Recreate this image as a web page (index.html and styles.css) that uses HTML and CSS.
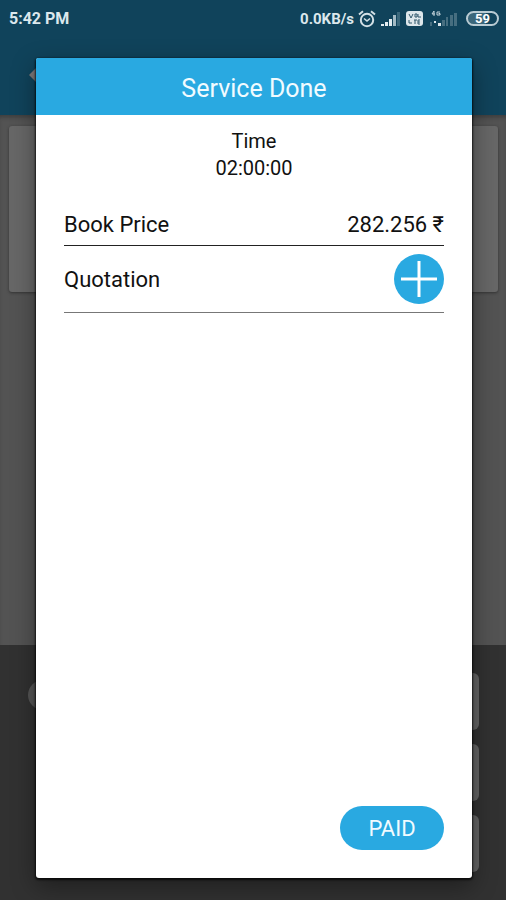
FILE: index.html
```
<!DOCTYPE html>
<html lang="en">
<head>
  <meta charset="UTF-8" />
  <meta name="viewport" content="width=device-width, initial-scale=1.0"/>
  <title>Service Done</title>
  <link rel="stylesheet" href="styles.css">
</head>
<body>
  <div class="page">
    <header class="app-bar">
      <button class="back" aria-label="Back">
        <svg width="16" height="16" viewBox="0 0 16 16"><path d="M9 0L1 8l8 8h7V0z" fill="#7c7879"/></svg>
      </button>
    </header>
    <main class="content">
      <div class="card"></div>
    </main>
    <footer class="panel">
      <div class="avatar"></div>
      <div class="actions">
        <div class="action"></div>
        <div class="action"></div>
        <div class="action"></div>
      </div>
    </footer>
  </div>

  <div class="status-bar">
    <span>5:42 PM</span>
    <div class="status-icons">
      <span>0.0KB/s</span>
      <!-- alarm -->
      <svg width="18" height="18" viewBox="0 0 18 18" fill="none" stroke="#d3e0e6" stroke-width="2">
        <circle cx="9" cy="10" r="6.2"/>
        <path d="M1 4.5L5 1.2M17 4.5L13 1.2"/>
        <path d="M6 8.5l3 2.5 3-2.5" stroke-width="1.6"/>
      </svg>
      <!-- signal, sim 1 -->
      <svg class="signal" width="20" height="16" viewBox="0 0 20 16" fill="#e3edf1">
        <path d="M0 13h3v2H0zM4 11h3v4H4zM8 8h3v7H8z"/>
        <path d="M12 4h3v11h-3z" fill="#a3bac4"/>
        <path d="M16 1h3v14h-3z" fill="#3b687c"/>
      </svg>
      <!-- volte -->
      <svg class="volte" width="17" height="15" viewBox="0 0 17 15" fill="none">
        <rect width="17" height="15" rx="3" fill="#dde7eb"/>
        <path d="M3 3l2 4 2-4M9 3h2v3H9zM12 3v3h3M3 9v3h3M8 9h3M9 9v4M14 9h-2v4h2M12 11h2" stroke="#31596c" stroke-width="1"/>
      </svg>
      <!-- signal, sim 2 -->
      <svg class="signal-4g" width="29" height="18" viewBox="0 0 29 18">
        <path d="M5 1L3 4h3M5 1v5M11 2H8v3h3V3.500H9.500" fill="none" stroke="#c5d5dc" stroke-width="1"/>
        <path d="M5 11h2v2H5zM9 13h3v3H9z" fill="#dce6eb"/>
        <path d="M1 12h2v4H1zM13 10h3v6h-3zM17 7h2v9h-2zM21 5h3v11h-3zM25 3h3v13h-3z" fill="#466e80"/>
      </svg>
      <span class="battery">59</span>
    </div>
  </div>

  <div class="dialog" role="dialog" aria-labelledby="title">
    <h1 class="dialog-title" id="title">Service Done</h1>
    <div class="dialog-body">
      <div class="time">
        <div>Time</div>
        <div>02:00:00</div>
      </div>
      <div class="row">
        <span>Book Price</span>
        <span>282.256 ₹</span>
      </div>
      <div class="row row-quotation">
        <span>Quotation</span>
        <button class="add-btn" aria-label="Add quotation">
          <svg width="50" height="50" viewBox="0 0 50 50"><path d="M25 7v36M7 25h36" stroke="#fff" stroke-width="3"/></svg>
        </button>
      </div>
      <button class="paid-btn">PAID</button>
    </div>
  </div>
</body>
</html>
```
FILE: styles.css
```
body {
  margin: 0;
  font-family: Roboto, "Noto Sans", sans-serif;
  color: #111;
  background: #2f2f2f;
}
button {
  padding: 0;
  border: none;
  font-family: inherit;
  cursor: pointer;
}
svg {
  display: block;
}

/* screen behind the dialog */
.page {
  display: flex;
  flex-direction: column;
  min-height: 100vh;
}
.app-bar {
  box-sizing: border-box;
  height: 115px;
  padding: 67px 28px 0;
  background: #10435b;
}
.back {
  background: none;
}
.content {
  flex: 1;
  padding: 11px 8px 0 9px;
  background: #535353;
  box-shadow: inset 0 4px 4px -2px #3c3c3c;
}
.card {
  height: 166px;
  border-radius: 3px;
  background: #676767;
  box-shadow: 0 1px 3px #333;
}
.panel {
  display: flex;
  align-items: flex-start;
  justify-content: space-between;
  padding: 28px 27px 28px 28px;
  background: #313131;
}
.avatar {
  width: 30px;
  height: 30px;
  margin-top: 7px;
  border-radius: 50%;
  background: #555;
}
.actions {
  display: grid;
  gap: 14px;
  width: 120px;
}
.action {
  height: 57px;
  border-radius: 6px;
  background: #646464;
}

.status-bar {
  position: absolute;
  top: 0;
  left: 0;
  right: 0;
  display: flex;
  align-items: center;
  justify-content: space-between;
  height: 37px;
  padding: 0 7px 0 9px;
  color: #dce8ed;
  font-size: 16px;
  font-weight: 700;
}
.status-icons {
  display: flex;
  align-items: center;
  gap: 4px;
  font-size: 15px;
}
.signal {
  margin-left: 1px;
}
.volte {
  margin-left: 1px;
}
.signal-4g {
  margin-left: 2px;
}
.battery {
  box-sizing: border-box;
  width: 33px;
  height: 15px;
  margin-left: 4px;
  border: 2px solid #b9cbd3;
  border-radius: 8px;
  background: linear-gradient(90deg, #3b677b 62%, #10435b 62%);
  color: #fff;
  font-size: 13px;
  line-height: 12px;
  text-align: center;
}

.dialog {
  position: absolute;
  top: 58px;
  right: 34px;
  bottom: 22px;
  left: 36px;
  display: flex;
  flex-direction: column;
  border-radius: 3px;
  background: #fff;
  box-shadow: 0 1px 2px 1px rgba(0, 0, 0, 0.7), 0 8px 24px rgba(0, 0, 0, 0.4);
}
.dialog-title {
  margin: 0;
  padding: 4px 0 0;
  border-radius: 2px 2px 0 0;
  background: #29a9e1;
  color: #f1fbff;
  font-size: 25px;
  font-weight: 400;
  line-height: 53px;
  text-align: center;
}
.dialog-body {
  flex: 1;
  display: flex;
  flex-direction: column;
  padding: 13px 28px 28px;
}
.time {
  margin-bottom: 22px;
  font-size: 20px;
  line-height: 27px;
  text-align: center;
}
.row {
  display: flex;
  align-items: center;
  justify-content: space-between;
  height: 41px;
  border-bottom: 1px solid #222;
  font-size: 22px;
}
.row-quotation {
  height: 66px;
  border-color: #777;
}
.add-btn {
  width: 50px;
  height: 50px;
  border-radius: 50%;
  background: #29a9e1;
}
.paid-btn {
  align-self: flex-end;
  width: 104px;
  height: 44px;
  margin-top: auto;
  border-radius: 22px;
  background: #29a9e1;
  color: #f1fbff;
  font-size: 22px;
}
```
